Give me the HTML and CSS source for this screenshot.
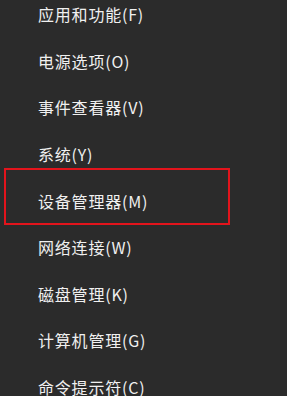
FILE: index.html
```html
<!DOCTYPE html>
<html lang="zh-CN">
<head>
<meta charset="utf-8">
<link rel="stylesheet" href="styles.css">
</head>
<body>
<div class="menu">
  <ul class="items">
    <li class="item">应用和功能(F)</li>
    <li class="item">电源选项(O)</li>
    <li class="item">事件查看器(V)</li>
    <li class="item">系统(Y)</li>
    <li class="item">设备管理器(M)</li>
    <li class="item">网络连接(W)</li>
    <li class="item">磁盘管理(K)</li>
    <li class="item">计算机管理(G)</li>
    <li class="item">命令提示符(C)</li>
  </ul>
  <div class="highlight"></div>
</div>
</body>
</html>
```
FILE: styles.css
```css
html, body {
  margin: 0;
  padding: 0;
  background: #2b2b2b;
  width: 287px;
  height: 396px;
  overflow: hidden;
}
.menu {
  position: relative;
  width: 287px;
  height: 396px;
  background: #2b2b2b;
}
.items {
  list-style: none;
  margin: -9px 0 0 0;
  padding: 0 0 0 38px;
}
.item {
  height: 46.6px;
  display: flex;
  align-items: center;
  font-family: "Noto Sans CJK SC", "Noto Sans", sans-serif;
  font-size: 16px;
  letter-spacing: 0.8px;
  color: #f0f0f0;
  white-space: nowrap;
}
.highlight {
  position: absolute;
  left: 4px;
  top: 177px;
  width: 222px;
  height: 53px;
  border: 2px solid #e3141c;
}
```
